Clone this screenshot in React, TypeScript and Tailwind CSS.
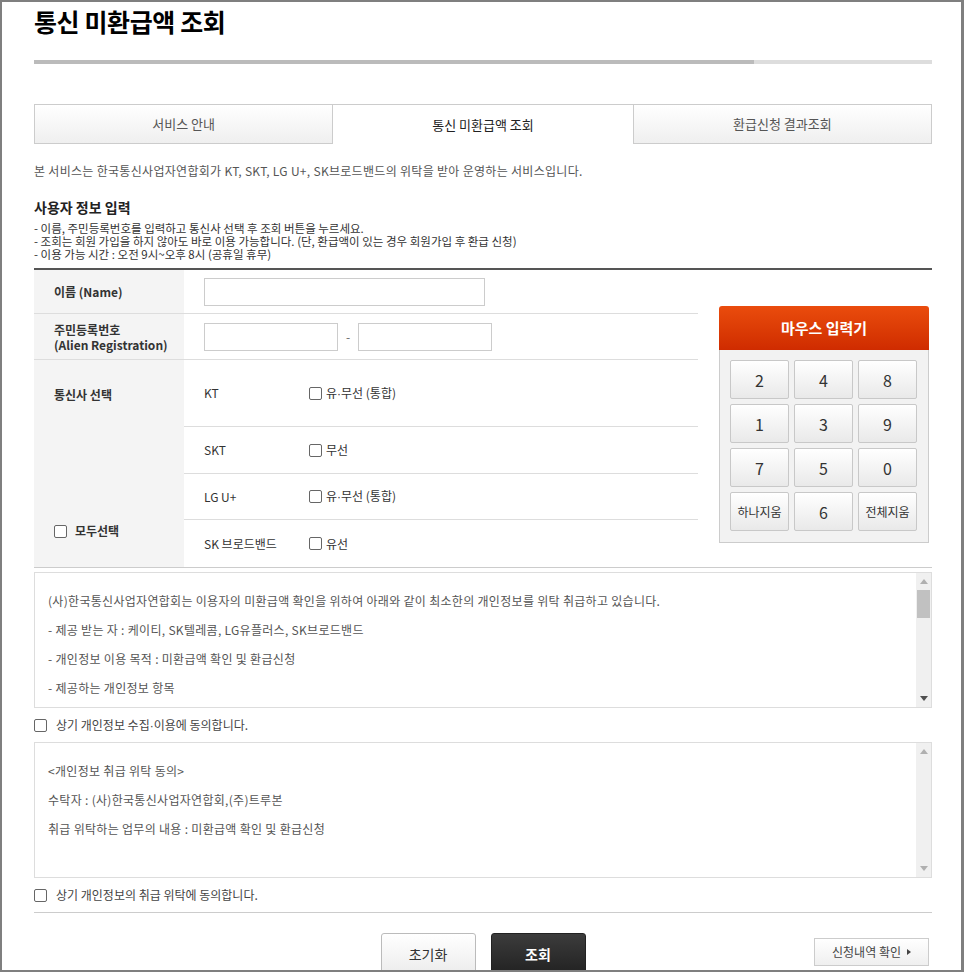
import React from 'react'

const Check = () => (
  <span className="inline-block w-[13px] h-[13px] shrink-0 border border-[#666] rounded-[2px] bg-white" />
)

const Dot = () => <span className="font-['Liberation_Sans',sans-serif]">·</span>

function ScrollBar({ thumb, dark }: { thumb?: boolean; dark?: boolean }) {
  return (
    <div className="w-[15px] bg-[#f0f0f0] flex flex-col">
      <div className="h-[17px] flex items-center justify-center">
        <span className="w-0 h-0 border-x-[4px] border-x-transparent border-b-[5px] border-b-[#b0b0b0]" />
      </div>
      {thumb && <div className="h-[28px] mx-[1px] bg-[#c1c1c1]" />}
      <div className="flex-1" />
      <div className="h-[17px] flex items-center justify-center">
        <span
          className={`w-0 h-0 border-x-[4px] border-x-transparent border-t-[5px] ${
            dark ? 'border-t-[#505050]' : 'border-t-[#b0b0b0]'
          }`}
        />
      </div>
    </div>
  )
}

const keys = ['2', '4', '8', '1', '3', '9', '7', '5', '0', '하나지움', '6', '전체지움']

const carriers = [
  { name: 'KT', opt: <>유<Dot />무선 (통합)</>, h: 'h-[67px]' },
  { name: 'SKT', opt: <>무선</>, h: 'h-[47px]' },
  { name: 'LG U+', opt: <>유<Dot />무선 (통합)</>, h: 'h-[46px]' },
  { name: 'SK 브로드밴드', opt: <>유선</>, h: 'h-[47px]' },
]

export default function App() {
  return (
    <div className="w-[964px] h-[972px] overflow-hidden bg-white border-t-2 border-l-2 border-b-2 border-r-[3px] border-[#7f7f7f] font-['Noto_Sans_CJK_KR',sans-serif] text-[#333]">
      <div className="pl-[32px] pr-[29px]">

        {/* Title */}
        <h1 className="pt-[2px] text-[25px] leading-[34px] font-bold text-black tracking-[-0.4px]">
          통신 미환급액 조회
        </h1>

        {/* Progress */}
        <div className="mt-[22px] h-[4px] flex">
          <div className="w-[720px] bg-[#bbb]" />
          <div className="flex-1 bg-[#ddd]" />
        </div>

        {/* Tabs */}
        <div className="mt-[40px] grid grid-cols-3 h-[40px] text-[13px]">
          <div className="border border-[#ccc] bg-linear-to-b from-white to-[#efefef] flex items-center justify-center text-[#555]">
            서비스 안내
          </div>
          <div className="border-t border-[#ccc] bg-white flex items-center justify-center text-[#222]">
            통신 미환급액 조회
          </div>
          <div className="border border-[#ccc] bg-linear-to-b from-white to-[#efefef] flex items-center justify-center text-[#555]">
            환급신청 결과조회
          </div>
        </div>

        <p className="mt-[19px] text-[12px] leading-[16px] text-[#555] tracking-[0.3px]">
          본 서비스는 한국통신사업자연합회가 KT, SKT, LG U+, SK브로드밴드의 위탁을 받아 운영하는 서비스입니다.
        </p>

        <h2 className="mt-[19px] text-[14px] leading-[18px] font-bold text-[#222]">사용자 정보 입력</h2>
        <ul className="mt-[6px] text-[11.5px] leading-[13px] text-[#333]">
          <li>- 이름, 주민등록번호를 입력하고 통신사 선택 후 조회 버튼을 누르세요.</li>
          <li>- 조회는 회원 가입을 하지 않아도 바로 이용 가능합니다. (단, 환급액이 있는 경우 회원가입 후 환급 신청)</li>
          <li>- 이용 가능 시간 : 오전 9시~오후 8시 (공휴일 휴무)</li>
        </ul>

        {/* Form */}
        <div className="mt-[7px] border-t-2 border-[#555] border-b border-b-[#ccc] flex items-start">
          <div className="w-[664px] text-[12px]">
            <div className="h-[44px] flex border-b border-[#ddd]">
              <div className="w-[150px] bg-[#f4f4f4] pl-[20px] flex items-center font-bold">이름 (Name)</div>
              <div className="pl-[20px] flex items-center">
                <div className="w-[281px] h-[28px] border border-[#ccc] bg-white" />
              </div>
            </div>
            <div className="h-[46px] flex border-b border-[#ddd]">
              <div className="w-[150px] bg-[#f4f4f4] pl-[20px] flex flex-col justify-center font-bold leading-[15px]">
                <span>주민등록번호</span>
                <span>(Alien Registration)</span>
              </div>
              <div className="pl-[20px] flex items-center">
                <div className="w-[134px] h-[28px] border border-[#ccc] bg-white" />
                <span className="w-[20px] text-center text-[#666]">-</span>
                <div className="w-[134px] h-[28px] border border-[#ccc] bg-white" />
              </div>
            </div>
            <div className="flex">
              <div className="w-[150px] bg-[#f4f4f4] pl-[20px] pt-[26px] pb-[27px] flex flex-col justify-between font-bold">
                <span>통신사 선택</span>
                <span className="flex items-center gap-[8px]">
                  <Check />
                  모두선택
                </span>
              </div>
              <div className="flex-1">
                {carriers.map((c, i) => (
                  <div
                    key={c.name}
                    className={`${c.h} pl-[20px] flex items-center ${i < 3 ? 'border-b border-[#ddd]' : ''}`}
                  >
                    <span className="w-[105px]">{c.name}</span>
                    <span className="flex items-center gap-[4px]">
                      <Check />
                      <span>{c.opt}</span>
                    </span>
                  </div>
                ))}
              </div>
            </div>
          </div>

          {/* Mouse keypad */}
          <div className="ml-[21px] mt-[36px] w-[210px]">
            <div className="h-[44px] rounded-t-[3px] bg-linear-to-b from-[#ea4c0d] to-[#cf2b00] text-white text-[15px] font-bold flex items-center justify-center">
              마우스 입력기
            </div>
            <div className="border border-t-0 border-[#ccc] bg-[#f2f2f2] pt-[10px] pb-[11px] px-[10px] grid grid-cols-[59px_59px_59px] gap-[5px]">
              {keys.map((k) => (
                <div
                  key={k}
                  className={`h-[39px] border border-[#c8c8c8] rounded-[2px] bg-linear-to-b from-white to-[#e9e9e9] flex items-center justify-center text-[#333] ${
                    k.length > 1 ? 'text-[12px]' : 'text-[16px]'
                  }`}
                >
                  {k}
                </div>
              ))}
            </div>
          </div>
        </div>

        {/* Agreement 1 */}
        <div className="mt-[4px] h-[136px] border border-[#ddd] flex overflow-hidden">
          <div className="flex-1 px-[13px] pt-[13px] text-[12px] leading-[29px] text-[#555] tracking-[0.3px]">
            <p>(사)한국통신사업자연합회는 이용자의 미환급액 확인을 위하여 아래와 같이 최소한의 개인정보를 위탁 취급하고 있습니다.</p>
            <p>- 제공 받는 자 : 케이티, SK텔레콤, LG유플러스, SK브로드밴드</p>
            <p>- 개인정보 이용 목적 : 미환급액 확인 및 환급신청</p>
            <p>- 제공하는 개인정보 항목</p>
          </div>
          <ScrollBar thumb dark />
        </div>
        <div className="h-[34px] flex items-center gap-[9px] text-[12px] text-[#444]">
          <Check />
          <span>상기 개인정보 수집<Dot />이용에 동의합니다.</span>
        </div>

        {/* Agreement 2 */}
        <div className="h-[136px] border border-[#ddd] flex overflow-hidden">
          <div className="flex-1 px-[13px] pt-[13px] text-[12px] leading-[29px] text-[#555] tracking-[0.3px]">
            <p>&lt;개인정보 취급 위탁 동의&gt;</p>
            <p>수탁자 : (사)한국통신사업자연합회,(주)트루본</p>
            <p>취급 위탁하는 업무의 내용 : 미환급액 확인 및 환급신청</p>
          </div>
          <ScrollBar />
        </div>
        <div className="h-[34px] flex items-center gap-[9px] text-[12px] text-[#444]">
          <Check />
          상기 개인정보의 취급 위탁에 동의합니다.
        </div>

        {/* Buttons */}
        <div className="border-t border-[#ccc] pt-[20px] grid grid-cols-[1fr_auto_1fr] items-start">
          <div />
          <div className="flex gap-[15px]">
            <div className="w-[95px] h-[42px] border border-[#bbb] rounded-t-[3px] bg-linear-to-b from-white to-[#ececec] flex items-center justify-center text-[14px] text-[#333]">
              초기화
            </div>
            <div className="w-[95px] h-[42px] border border-[#222] rounded-t-[3px] bg-linear-to-b from-[#3c3c3c] to-[#222] flex items-center justify-center text-[14px] font-bold text-white">
              조회
            </div>
          </div>
          <div className="flex justify-end pr-[3px] pt-[5px]">
            <div className="w-[115px] h-[28px] border border-[#ccc] bg-linear-to-b from-white to-[#efefef] flex items-center justify-center gap-[6px] text-[12px] text-[#444]">
              신청내역 확인
              <span className="w-0 h-0 border-y-[3px] border-y-transparent border-l-[4px] border-l-[#444]" />
            </div>
          </div>
        </div>

      </div>
    </div>
  )
}
